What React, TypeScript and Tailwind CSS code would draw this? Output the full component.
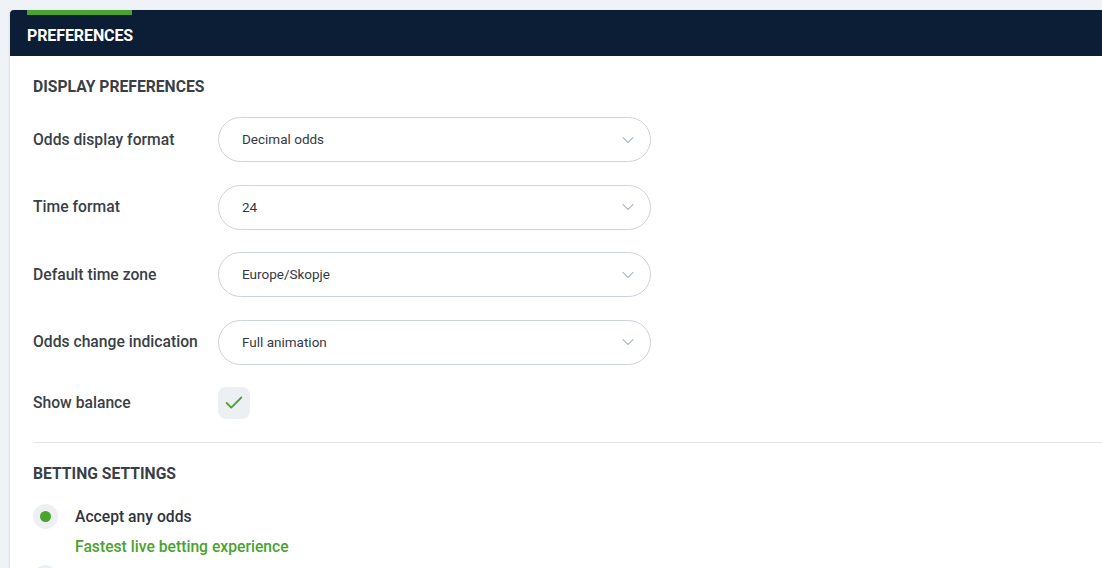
import { ChevronDown, Check } from "lucide-react";

const rows = [
  { label: "Odds display format", value: "Decimal odds" },
  { label: "Time format", value: "24" },
  { label: "Default time zone", value: "Europe/Skopje" },
  { label: "Odds change indication", value: "Full animation" },
];

function Select({ value }: { value: string }) {
  return (
    <div className="flex items-center justify-between w-[433px] h-[45px] rounded-full border border-[#cdd3dd] bg-white pl-[23px] pr-[12px]">
      <span className="text-[13.5px] text-[#333a44]">{value}</span>
      <ChevronDown size={20} strokeWidth={1.3} className="text-[#b4bcc8]" />
    </div>
  );
}

export default function App() {
  return (
    <div
      className="w-[1102px] h-[568px] overflow-hidden bg-[#eff2f7] pt-[10px] pl-[10px]"
      style={{ fontFamily: "Roboto, 'Liberation Sans', sans-serif" }}
    >
      <div className="h-[600px] bg-white rounded-tl-[4px] overflow-hidden shadow-[-1px_0_2px_rgba(0,0,0,0.08)]">
        {/* header */}
        <div className="relative h-[46px] bg-[#0c1d36] flex items-center pl-[17px]">
          <div className="absolute top-0 left-[17px] w-[105px] h-[5px] bg-[#4aa32e]" />
          <span className="text-white font-bold text-[16px] tracking-[-0.1px] pt-[6px]">
            PREFERENCES
          </span>
        </div>

        <div className="pl-[23px] text-[15.7px]">
          <div className="pt-[19px] font-bold text-[#3a3f47] h-[40px]">
            DISPLAY PREFERENCES
          </div>

          <div className="flex flex-col gap-[22.5px] pt-[21px]">
            {rows.map((r) => (
              <div key={r.label} className="flex items-center">
                <div className="w-[185px] font-medium text-[#3a3f47]">{r.label}</div>
                <Select value={r.value} />
              </div>
            ))}
          </div>

          <div className="flex items-center pt-[22px]">
            <div className="w-[185px] font-medium text-[#3a3f47]">Show balance</div>
            <div className="w-[32px] h-[32px] rounded-[8px] bg-[#edf0f3] flex items-center justify-center">
              <Check size={22} strokeWidth={2} className="text-[#4aa32e]" />
            </div>
          </div>

          <div className="mt-[23.5px] border-t border-[#e4e7ec]" />

          <div className="pt-[19px] font-bold text-[#3a3f47]">BETTING SETTINGS</div>

          <div className="flex pt-[18px]">
            <div className="w-[25px] h-[25px] rounded-full bg-[#edf0f3] flex items-center justify-center shrink-0">
              <div className="w-[11px] h-[11px] rounded-full bg-[#4aa32e]" />
            </div>
            <div className="pl-[17px] pt-[1px]">
              <div className="font-medium text-[#2f3540]">Accept any odds</div>
              <div className="font-medium text-[#4aa32e] pt-[7px]">
                Fastest live betting experience
              </div>
            </div>
          </div>

          <div className="flex pt-[6px]">
            <div className="w-[25px] h-[25px] rounded-full bg-[#edf0f3]" />
          </div>
        </div>
      </div>
    </div>
  );
}
